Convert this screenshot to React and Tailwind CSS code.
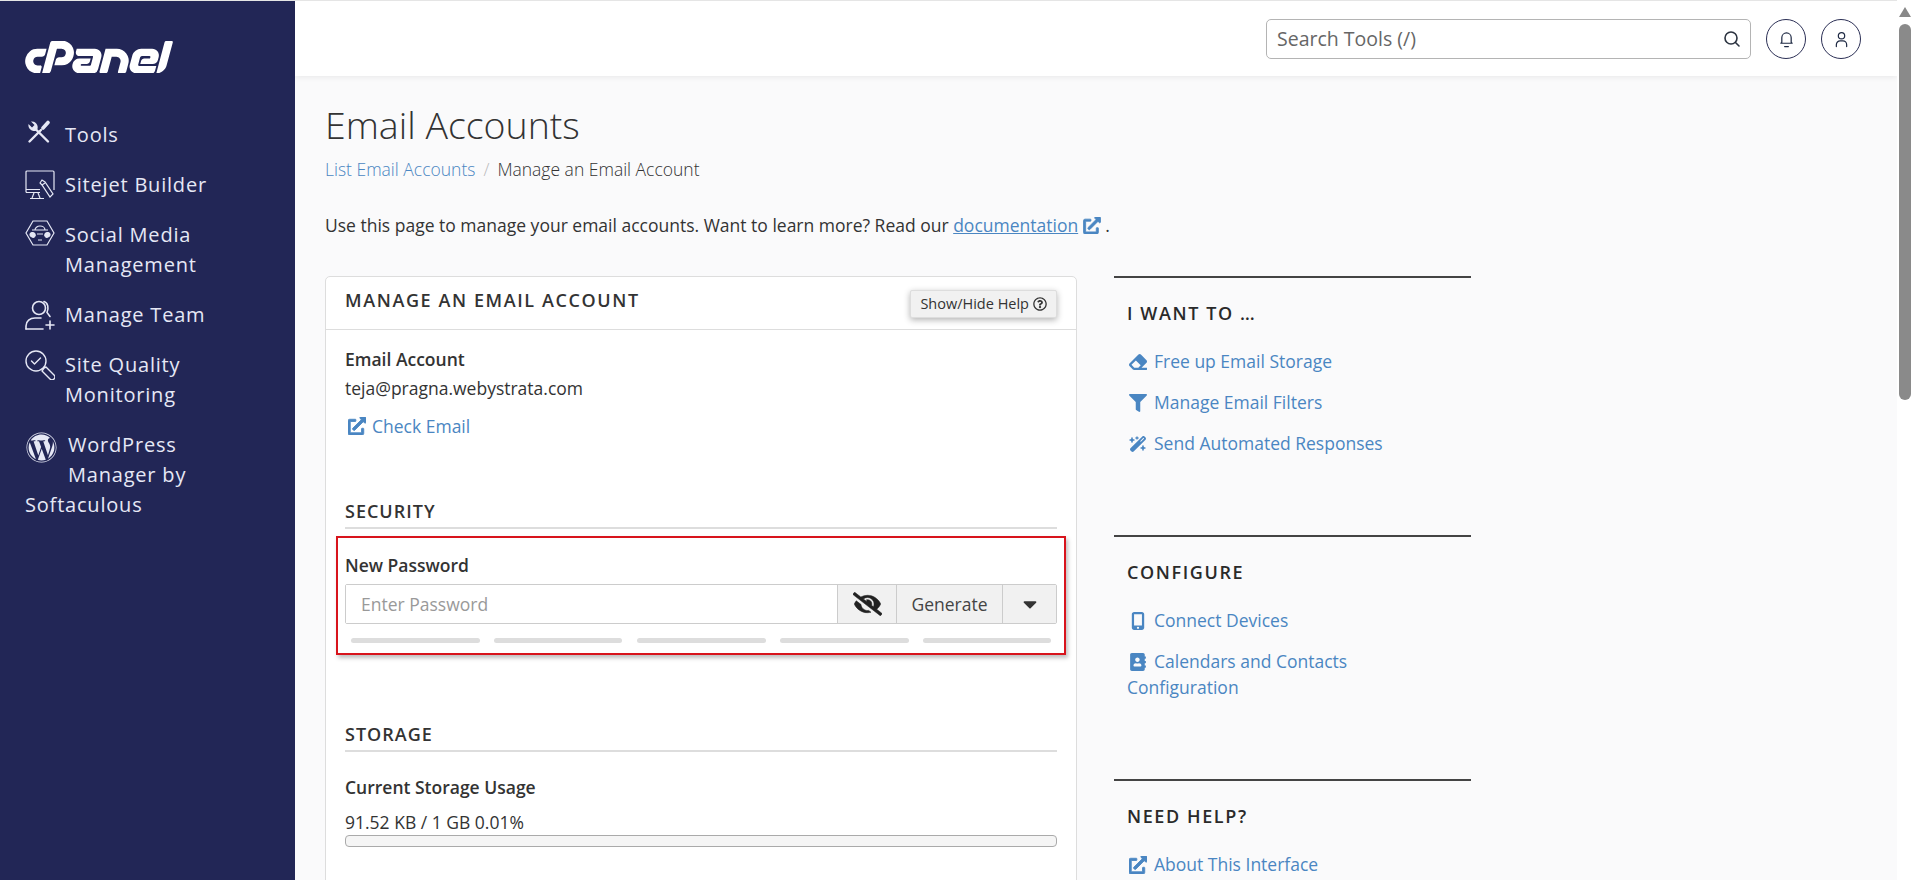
import React from "react";
import { SiCpanel } from "react-icons/si";
import {
  FaExternalLinkAlt, FaEraser, FaFilter, FaEyeSlash, FaCaretDown, FaAddressBook, FaRegQuestionCircle, FaWordpress,
} from "react-icons/fa";
import { FaWandMagicSparkles, FaMobileScreenButton } from "react-icons/fa6";

const ToolsIcon = () => (
  <svg viewBox="0 0 24 24" className="block w-[25px] h-[24px] ml-[1px]" fill="none" stroke="currentColor" strokeLinecap="round">
    <path d="M3 21.5L14.5 10" strokeWidth="2.4" />
    <path d="M16.5 8L21.5 2.5" strokeWidth="3.6" />
    <path d="M21.5 21.5L9 9" strokeWidth="2.4" />
    <path d="M2 4L5.5 7.5L8 5L4.5 1.5A6 6 0 0 1 11 9L9 11A6 6 0 0 1 2 4Z" fill="currentColor" stroke="none" />
  </svg>
);
const SitejetIcon = () => (
  <svg viewBox="0 0 30 30" className="block w-[30px] h-[30px]" fill="none" stroke="currentColor" strokeWidth="1.2">
    <path d="M5 22.5H2a1 1 0 0 1-1-1V2a1 1 0 0 1 1-1h26a1 1 0 0 1 1 1v18" />
    <path d="M1 19.5h14M1 22.5h14" />
    <path d="M9 23l-2 5M13 23l2 5M5 28.5h14" />
    <path d="M15 13l2-3 3 2 8 12-3 3-8-12z" fill="#222656" />
    <path d="M17 15l3-2" />
  </svg>
);
const SocialIcon = () => (
  <svg viewBox="0 0 30 26" className="block w-[30px] h-[26px]" fill="none" stroke="currentColor" strokeWidth="1.2">
    <path d="M8 1h14l7 12-7 12H8L1 13z" />
    <path d="M10 10a5 4 0 0 1 10 0M7 10h16" />
    <path d="M5 15c0-3 4-3 5-1s-1 4-3 3-2-1-2-2zM25 15c0-3-4-3-5-1s1 4 3 3 2-1 2-2z" fill="currentColor" />
    <path d="M12 14h6M13 20h4" />
  </svg>
);
const TeamIcon = () => (
  <svg viewBox="0 0 30 30" className="block w-[30px] h-[30px]" fill="none" stroke="currentColor" strokeWidth="1.6" strokeLinecap="round">
    <circle cx="14" cy="8" r="6.5" />
    <path d="M19 1.5c4 1 5 7 3 11l3 4" />
    <path d="M1 29v-3c0-5 4-8 9-8h6" />
    <path d="M1 29h17" />
    <path d="M25 21v8M21 25h8" />
  </svg>
);
const QualityIcon = () => (
  <svg viewBox="0 0 30 30" className="block w-[30px] h-[30px]" fill="none" stroke="currentColor" strokeWidth="1.4" strokeLinecap="round" strokeLinejoin="round">
    <circle cx="11" cy="11" r="10" />
    <path d="M6.5 11l3 3 6-6" />
    <path d="M19 18l2-1 8 8a2.5 2.5 0 0 1-4 4l-8-8z" />
  </svg>
);
const BellIcon = () => (
  <svg viewBox="0 0 16 18" className="w-[15px] h-[17px]" fill="none" stroke="#1f2a44" strokeWidth="1.3" strokeLinecap="round" strokeLinejoin="round">
    <path d="M3 12V7a5 5 0 0 1 10 0v5l1 1H2z" />
    <path d="M6 16.5h4" />
  </svg>
);
const UserIcon = () => (
  <svg viewBox="0 0 16 18" className="w-[15px] h-[17px]" fill="none" stroke="#1f2a44" strokeWidth="1.3" strokeLinecap="round">
    <circle cx="8" cy="5" r="3.4" />
    <path d="M2.5 16.5v-2a4 4 0 0 1 4-4h3a4 4 0 0 1 4 4v2" />
  </svg>
);

function NavItem({ icon, wide, children }) {
  return (
    <li className="mb-5 leading-[30px]">
      <span className={`float-left h-[38px] ${wide ? "w-[43px] pl-px" : "w-10"}`}>{icon}</span>
      {children}
    </li>
  );
}

function SideLink({ icon, children }) {
  return (
    <li className="leading-[26px] text-[#4a86c2] mb-[15px]">
      <span className="inline-flex w-[27px] pl-[2px] align-[-3px]">{icon}</span>
      {children}
    </li>
  );
}

function SideBlock({ title, height, children }) {
  return (
    <section className={`border-t-2 border-[#444] px-[13px] pt-[23px] ${height}`}>
      <h2 className="text-[18px] leading-6 font-semibold tracking-[1.6px] text-[#2a2a2a] uppercase mb-[23px]">{title}</h2>
      <ul>{children}</ul>
    </section>
  );
}

function SectionHeading({ children }) {
  return (
    <h3 className="text-[18px] leading-6 font-semibold tracking-[1px] uppercase text-[#333] pb-[4px] border-b-2 border-[#ddd]">{children}</h3>
  );
}

export default function App() {
  return (
    <div className="flex h-[880px] overflow-hidden bg-[#fafafb] text-[#333] text-[17.5px]" style={{ fontFamily: '"Open Sans", sans-serif' }}>
      <aside className="w-[295px] shrink-0 bg-[#222656] border-t border-[#e5e5e5] text-[#e6e8f5] pl-[25px] pr-[30px] text-[20px] tracking-[0.8px]">
        <div className="h-[40px]" />
        <SiCpanel viewBox="0 9.4 24 5.2" className="block w-[148px] h-[32px] text-white" />
        <ul className="mt-[47px]">
          <NavItem icon={<ToolsIcon />}>Tools</NavItem>
          <NavItem icon={<SitejetIcon />}>Sitejet Builder</NavItem>
          <NavItem icon={<SocialIcon />}>Social Media Management</NavItem>
          <NavItem icon={<TeamIcon />}>Manage Team</NavItem>
          <NavItem icon={<QualityIcon />}>Site Quality Monitoring</NavItem>
          <NavItem wide icon={<FaWordpress className="w-[31px] h-[31px] mt-[2px]" />}>WordPress Manager by Softaculous</NavItem>
        </ul>
      </aside>

      <div className="flex-1 min-w-0 flex flex-col">
        <header className="h-[76px] shrink-0 bg-white border-t border-[#e5e5e5] shadow-[0_1px_6px_rgba(0,0,0,0.08)] flex items-start justify-end pt-[18px] pr-[36px] gap-[15px]">
          <div className="w-[485px] h-10 border border-[#b4b4b4] rounded-[5px] flex items-center justify-between pl-[10px] pr-[9px] bg-white">
            <span className="text-[19.5px] text-[#666]">Search Tools (/)</span>
            <svg viewBox="0 0 18 18" className="w-[18px] h-[18px]" fill="none" stroke="#2b3340" strokeWidth="1.6" strokeLinecap="round">
              <circle cx="8" cy="8" r="6" /><path d="M12.5 12.5L16 16" />
            </svg>
          </div>
          <div className="w-10 h-10 rounded-full border border-[#2b2f55] flex items-center justify-center"><BellIcon /></div>
          <div className="w-10 h-10 rounded-full border border-[#2b2f55] flex items-center justify-center"><UserIcon /></div>
        </header>

        <main className="flex-1 min-h-0 overflow-hidden pl-[30px]">
          <h1 className="text-[37.5px] leading-[50px] font-light text-[#333] mt-[24px]">Email Accounts</h1>
          <nav className="mt-[7px] leading-6 font-light flex">
            <span className="text-[#4a86c2]">List Email Accounts</span>
            <span className="text-[#bbb] px-2">/</span>
            <span>Manage an Email Account</span>
          </nav>
          <p className="mt-[32px] leading-6">
            Use this page to manage your email accounts. Want to learn more? Read our{" "}
            <span className="text-[#4a86c2] underline">documentation</span>{" "}
            <FaExternalLinkAlt strokeWidth={24} className="inline w-[18px] h-[17px] text-[#4a86c2] align-[-2px]" /> .
          </p>

          <div className="flex gap-[37px] mt-[39px] items-start">
            <div className="w-[752px] shrink-0 bg-white border border-[#ddd] rounded-t-[5px]">
              <div className="h-[53px] border-b border-[#ddd] flex items-start justify-between pl-[19px] pr-[19px]">
                <h2 className="text-[18px] leading-[47px] font-semibold tracking-[1.6px] text-[#333] uppercase">Manage an Email Account</h2>
                <button className="mt-[13px] h-[28px] px-[9px] text-[14.5px] leading-none bg-[#f1f1f1] border border-[#ddd] rounded-[2px] shadow-[0_2px_6px_rgba(0,0,0,0.3)] flex items-center gap-1 text-[#333]">
                  Show/Hide Help <FaRegQuestionCircle className="w-[14px] h-[14px]" />
                </button>
              </div>
              <div className="px-[19px] pt-[17px] pb-10">
                <div className="leading-6 font-semibold">Email Account</div>
                <div className="leading-6 mt-[5px]">teja@pragna.webystrata.com</div>
                <div className="leading-6 mt-[14px] text-[#4a86c2] flex items-center gap-[6px] pl-[3px]">
                  <FaExternalLinkAlt strokeWidth={24} className="w-[18px] h-[18px]" /> Check Email
                </div>
                <div className="mt-[61px]"><SectionHeading>Security</SectionHeading></div>
                <div className="-mx-[9px] mt-[7px] border-2 border-[#d8141c] shadow-[2px_3px_4px_rgba(0,0,0,0.25)] h-[119px] px-[7px] pt-[15px]">
                  <div className="leading-6 font-semibold">New Password</div>
                  <div className="mt-[7px] h-10 flex border border-[#ccc] rounded-[2px]">
                    <div className="flex-1 bg-white pl-[15px] leading-[38px] text-[#999]">Enter Password</div>
                    <div className="w-[59px] bg-[#f1f1f1] border-l border-[#ccc] flex items-center justify-center">
                      <FaEyeSlash strokeWidth={12} className="w-[29px] h-[24px] text-[#222]" />
                    </div>
                    <div className="w-[106px] bg-[#f1f1f1] border-l border-[#ccc] flex items-center justify-center text-[#444]">Generate</div>
                    <div className="w-[54px] bg-[#f1f1f1] border-l border-[#ccc] flex items-center justify-center">
                      <FaCaretDown className="w-[14px] h-[22px] text-[#333]" />
                    </div>
                  </div>
                  <div className="mt-[14px] mx-[6px] flex justify-between">
                    <div className="w-[129px] h-[5px] rounded-full bg-[#ddd]" />
                    <div className="w-[128px] h-[5px] rounded-full bg-[#ddd]" />
                    <div className="w-[129px] h-[5px] rounded-full bg-[#ddd]" />
                    <div className="w-[129px] h-[5px] rounded-full bg-[#ddd]" />
                    <div className="w-[128px] h-[5px] rounded-full bg-[#ddd]" />
                  </div>
                </div>
                <div className="mt-[67px]"><SectionHeading>Storage</SectionHeading></div>
                <div className="leading-6 font-semibold mt-[23px]">Current Storage Usage</div>
                <div className="leading-6 mt-[11px]">91.52 KB / 1 GB 0.01%</div>
                <div className="mt-px h-[12px] rounded-[4px] border border-[#aaa] bg-[#f5f5f5]" />
              </div>
            </div>

            <aside className="w-[357px] shrink-0">
              <SideBlock title="I want to …" height="h-[259px]">
                <SideLink icon={<FaEraser className="w-[18px] h-[18px]" />}>Free up Email Storage</SideLink>
                <SideLink icon={<FaFilter className="w-[18px] h-[18px]" />}>Manage Email Filters</SideLink>
                <SideLink icon={<FaWandMagicSparkles className="w-[18px] h-[18px]" />}>Send Automated Responses</SideLink>
              </SideBlock>
              <SideBlock title="Configure" height="h-[244px]">
                <SideLink icon={<FaMobileScreenButton className="w-[18px] h-[18px]" />}>Connect Devices</SideLink>
                <SideLink icon={<FaAddressBook className="w-[18px] h-[18px]" />}>Calendars and Contacts Configuration</SideLink>
              </SideBlock>
              <SideBlock title="Need Help?" height="h-[100px]">
                <SideLink icon={<FaExternalLinkAlt strokeWidth={24} className="w-[18px] h-[18px]" />}>About This Interface</SideLink>
              </SideBlock>
            </aside>
          </div>
        </main>
      </div>

      <div className="w-4 shrink-0 bg-white flex flex-col items-center pt-[7px]">
        <div className="w-0 h-0 border-l-[6.5px] border-r-[6.5px] border-b-[10px] border-l-transparent border-r-transparent border-b-[#888]" />
        <div className="mt-[7px] w-[12px] h-[376px] rounded-full bg-[#8a8a8a]" />
      </div>
    </div>
  );
}
